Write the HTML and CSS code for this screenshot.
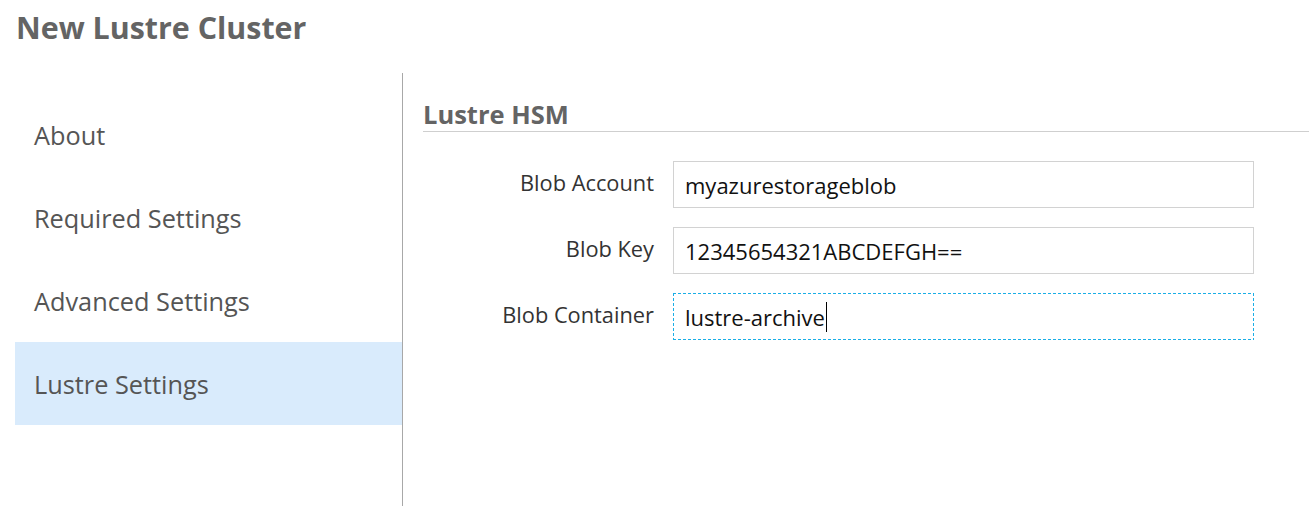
FILE: index.html
```html
<!DOCTYPE html>
<html>
<head>
<meta charset="utf-8">
<link rel="stylesheet" href="styles.css">
</head>
<body>
<div class="page">
  <h1 class="title">New Lustre Cluster</h1>
  <div class="main">
    <nav class="nav">
      <div class="nav-item">About</div>
      <div class="nav-item">Required Settings</div>
      <div class="nav-item">Advanced Settings</div>
      <div class="nav-item active">Lustre Settings</div>
    </nav>
    <section class="content">
      <h2 class="section-title">Lustre HSM</h2>
      <div class="form">
        <div class="row">
          <label class="label">Blob Account</label>
          <div class="input">myazurestorageblob</div>
        </div>
        <div class="row">
          <label class="label">Blob Key</label>
          <div class="input">12345654321ABCDEFGH==</div>
        </div>
        <div class="row">
          <label class="label">Blob Container</label>
          <div class="input focused">lustre-archive<span class="caret"></span></div>
        </div>
      </div>
    </section>
  </div>
</div>
</body>
</html>
```
FILE: styles.css
```css
* { box-sizing: border-box; }
html, body { margin: 0; padding: 0; background: #fff; }
body {
  font-family: "Open Sans", "Noto Sans", sans-serif;
  width: 1309px;
  height: 506px;
  overflow: hidden;
}
.page { padding-left: 15px; }
.title {
  margin: 0;
  padding: 8px 0 0 1px;
  height: 73px;
  font-size: 30.4px;
  font-weight: 700;
  color: #646464;
  line-height: 40px;
}
.main {
  display: flex;
  height: 433px;
}
.nav {
  width: 388px;
  border-right: 1px solid #a8a8a8;
  padding-top: 20px;
}
.nav-item {
  height: 83px;
  display: flex;
  align-items: center;
  padding-left: 19px;
  font-size: 25.3px;
  color: #555;
}
.nav-item.active { background: #d9ebfc; }
.content {
  flex: 1;
  padding-left: 20px;
  padding-top: 25px;
}
.section-title {
  margin: 0;
  font-size: 25.5px;
  font-weight: 700;
  color: #646464;
  line-height: 32px;
  border-bottom: 1px solid #cfcfcf;
  padding-bottom: 1px;
}
.form {
  padding-top: 29px;
  display: flex;
  flex-direction: column;
  gap: 19px;
}
.row {
  display: flex;
  align-items: center;
}
.label {
  width: 250px;
  text-align: right;
  font-size: 21.8px;
  color: #333;
  padding-right: 19px;
  padding-bottom: 4px;
}
.input {
  width: 581px;
  height: 47px;
  border: 1px solid #d2d2d2;
  padding-left: 11px;
  display: flex;
  align-items: center;
  font-size: 22px;
  color: #111;
}
.input.focused {
  border: 1px solid transparent;
  background:
    repeating-linear-gradient(90deg, #1aaee6 0 3px, transparent 3px 5px) top left / 100% 1px no-repeat,
    repeating-linear-gradient(90deg, #1aaee6 0 3px, transparent 3px 5px) bottom left / 100% 1px no-repeat,
    repeating-linear-gradient(180deg, #1aaee6 0 3px, transparent 3px 5px) top left / 1px 100% no-repeat,
    repeating-linear-gradient(180deg, #1aaee6 0 3px, transparent 3px 5px) top right / 1px 100% no-repeat;
  background-origin: border-box;
}
.caret {
  display: inline-block;
  width: 1px;
  height: 30px;
  margin-left: 1px;
  background: #000;
}
```
